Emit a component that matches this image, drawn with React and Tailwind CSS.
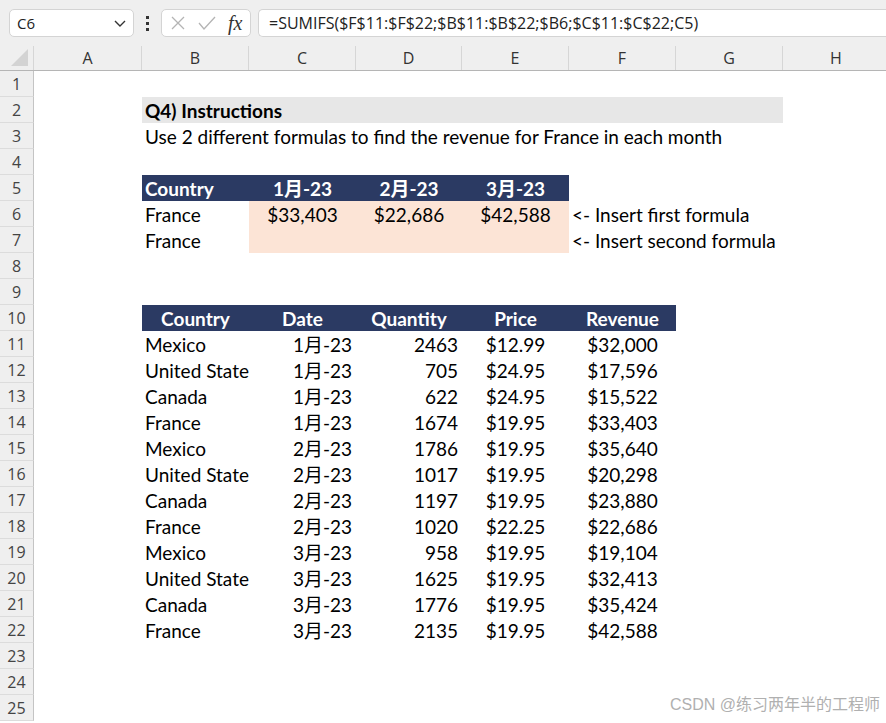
import React from 'react';

const font = { fontFamily: 'Lato, "Noto Sans CJK SC", sans-serif' };

const cols = ['A', 'B', 'C', 'D', 'E', 'F', 'G', 'H'];
const gridCols = 'grid grid-cols-[34px_108px_107px_107px_106px_107px_107px_107px_107px]';

const sales = [
  ['Mexico', '1月-23', '2463', '$12.99', '$32,000'],
  ['United States', '1月-23', '705', '$24.95', '$17,596'],
  ['Canada', '1月-23', '622', '$24.95', '$15,522'],
  ['France', '1月-23', '1674', '$19.95', '$33,403'],
  ['Mexico', '2月-23', '1786', '$19.95', '$35,640'],
  ['United States', '2月-23', '1017', '$19.95', '$20,298'],
  ['Canada', '2月-23', '1197', '$19.95', '$23,880'],
  ['France', '2月-23', '1020', '$22.25', '$22,686'],
  ['Mexico', '3月-23', '958', '$19.95', '$19,104'],
  ['United States', '3月-23', '1625', '$19.95', '$32,413'],
  ['Canada', '3月-23', '1776', '$19.95', '$35,424'],
  ['France', '3月-23', '2135', '$19.95', '$42,588'],
];

// cells from column A onwards: { span, text, align, bold, cls }
function cellsFor(r) {
  const navy = 'bg-[#2b3a63] text-white font-bold';
  const peach = 'bg-[#fce4d6]';
  if (r === 2) return [{}, { span: 6, text: 'Q4) Instructions', bold: true, cls: 'bg-[#e7e7e7]' }];
  if (r === 3) return [{}, { span: 7, text: 'Use 2 different formulas to find the revenue for France in each month' }];
  if (r === 5)
    return [
      {},
      { text: 'Country', cls: navy },
      { text: '1月-23', align: 'center', cls: navy },
      { text: '2月-23', align: 'center', cls: navy },
      { text: '3月-23', align: 'center', cls: navy },
    ];
  if (r === 6)
    return [
      {},
      { text: 'France' },
      { text: '$33,403', align: 'center', cls: peach },
      { text: '$22,686', align: 'center', cls: peach },
      { text: '$42,588', align: 'center', cls: peach },
      { span: 3, text: '<- Insert first formula' },
    ];
  if (r === 7)
    return [
      {},
      { text: 'France' },
      { text: '', cls: peach },
      { text: '', cls: peach },
      { text: '', cls: peach },
      { span: 3, text: '<- Insert second formula' },
    ];
  if (r === 10)
    return [
      {},
      { text: 'Country', align: 'center', cls: navy },
      { text: 'Date', align: 'center', cls: navy },
      { text: 'Quantity', align: 'center', cls: navy },
      { text: 'Price', align: 'center', cls: navy },
      { text: 'Revenue', align: 'center', cls: navy },
    ];
  if (r >= 11 && r <= 22) {
    const d = sales[r - 11];
    return [
      {},
      { text: d[0] },
      { text: d[1], align: 'right' },
      { text: d[2], align: 'right' },
      { text: d[3], align: 'center' },
      { text: d[4], align: 'center' },
    ];
  }
  return [];
}

function Row({ r }) {
  const cells = cellsFor(r);
  let used = 0;
  const out = cells.map((c, i) => {
    const span = c.span || 1;
    used += span;
    const align =
      c.align === 'center' ? 'justify-center' : c.align === 'right' ? 'justify-end pr-[4px]' : 'justify-start pl-[3px]';
    const spanCls = span === 7 ? 'col-span-7' : span === 6 ? 'col-span-6' : span === 3 ? 'col-span-3' : '';
    return (
      <div
        key={i}
        className={`${spanCls} flex items-end leading-[24px] overflow-hidden whitespace-nowrap text-[19px] text-black ${align} ${
          c.bold ? 'font-bold' : ''
        } ${c.cls || ''}`}
      >
        {c.text}
      </div>
    );
  });
  for (let k = used; k < 8; k++) out.push(<div key={'e' + k} />);
  return (
    <div className={`${gridCols} h-[26px]`}>
      <div
        className="flex items-center justify-center bg-[#efefef] border-r border-[#c4c4c4] border-b border-b-[#dcdcdc] text-[16px] text-[#444]"
        style={{ fontFamily: '"Open Sans", sans-serif' }}
      >
        {r}
      </div>
      {out}
    </div>
  );
}

export default function App() {
  const rows = Array.from({ length: 25 }, (_, i) => i + 1);
  return (
    <div className="relative w-[886px] h-[723px] overflow-hidden bg-white" style={font}>
      {/* toolbar */}
      <div className="h-[46px] bg-[#efefef] flex items-center pl-[9px]" style={{ fontFamily: '"Open Sans", sans-serif' }}>
        <div className="w-[125px] h-[28px] bg-white border border-[#d4d4d4] rounded-[5px] flex items-center justify-between pl-[7px] pr-[6px] text-[15px] text-[#222]">
          <span>C6</span>
          <svg width="14" height="14" viewBox="0 0 14 14" fill="none" stroke="#333" strokeWidth="1.4">
            <path d="M2 5l5 5 5-5" />
          </svg>
        </div>
        <div className="w-[27px] flex flex-col items-center gap-[3px]">
          <span className="w-[3px] h-[3px] bg-[#333]" />
          <span className="w-[3px] h-[3px] bg-[#333]" />
          <span className="w-[3px] h-[3px] bg-[#333]" />
        </div>
        <div className="w-[90px] h-[28px] bg-white border border-[#d4d4d4] rounded-[5px] flex items-center pl-[8px] gap-[12px]">
          <svg width="16" height="16" viewBox="0 0 16 16" stroke="#b4b4b4" strokeWidth="1.3">
            <path d="M2 2l12 12M14 2L2 14" />
          </svg>
          <svg width="18" height="16" viewBox="0 0 18 16" fill="none" stroke="#b4b4b4" strokeWidth="1.3">
            <path d="M1 8l5 6L17 2" />
          </svg>
          <span className="text-[20px] italic text-[#333] leading-none" style={{ fontFamily: '"Liberation Serif", serif' }}>
            fx
          </span>
        </div>
        <div className="ml-[7px] flex-1 h-[28px] bg-white border border-[#d4d4d4] rounded-l-[5px] border-r-0 flex items-center pl-[10px] text-[16px] text-[#222]">
          =SUMIFS($F$11:$F$22;$B$11:$B$22;$B6;$C$11:$C$22;C5)
        </div>
      </div>
      {/* column headers */}
      <div className={`${gridCols} h-[25px] bg-[#efefef] border-b border-[#b5b5b5]`} style={{ fontFamily: '"Open Sans", sans-serif' }}>
        <div className="relative border-r border-[#d6d6d6]">
          <div className="absolute right-[5px] bottom-[4px] w-0 h-0 border-l-[17px] border-l-transparent border-b-[17px] border-b-[#d3d3d3]" />
        </div>
        {cols.map((c) => (
          <div key={c} className="flex items-center justify-center border-r border-[#d6d6d6] text-[16px] text-[#333]">
            {c}
          </div>
        ))}
      </div>
      {rows.map((r) => (
        <Row key={r} r={r} />
      ))}
      <div
        className="absolute right-[6px] bottom-[6px] text-[16px] text-[#b0b0b0]"
        style={{ fontFamily: '"Liberation Sans", "Noto Sans CJK SC", sans-serif' }}
      >
        CSDN @练习两年半的工程师
      </div>
    </div>
  );
}
